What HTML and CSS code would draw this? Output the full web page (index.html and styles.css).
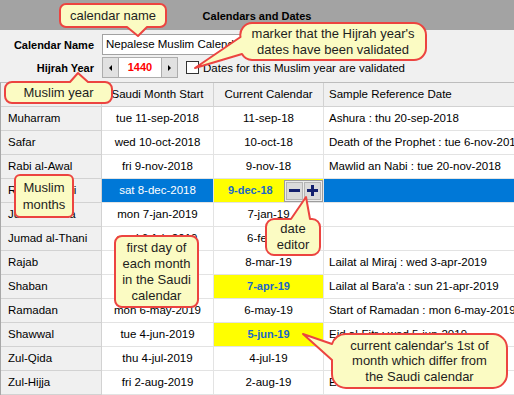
FILE: index.html
```html
<!DOCTYPE html>
<html>
<head>
<meta charset="utf-8">
<title>Calendars and Dates</title>
<link rel="stylesheet" href="styles.css">
</head>
<body>
<div class="titlebar">Calendars and Dates</div>
<div class="form">
  <div class="form-row">
    <span class="form-label">Calendar Name</span>
    <div class="textbox">Nepalese Muslim Calendar</div>
  </div>
  <div class="form-row">
    <span class="form-label">Hijrah Year</span>
    <div class="spinner">
      <span class="spin-btn"><span class="tri-left"></span></span>
      <span class="spin-value">1440</span>
      <span class="spin-btn"><span class="tri-right"></span></span>
    </div>
    <span class="checkbox"></span>
    <span class="check-label">Dates for this Muslim year are validated</span>
  </div>
</div>
<div class="grid">
  <div class="row head">
    <div class="cell"></div>
    <div class="cell">Saudi Month Start</div>
    <div class="cell">Current Calendar</div>
    <div class="cell left">Sample Reference Date</div>
  </div>
  <div class="row">
    <div class="cell fixed">Muharram</div>
    <div class="cell">tue 11-sep-2018</div>
    <div class="cell">11-sep-18</div>
    <div class="cell left">Ashura : thu 20-sep-2018</div>
  </div>
  <div class="row">
    <div class="cell fixed">Safar</div>
    <div class="cell">wed 10-oct-2018</div>
    <div class="cell">10-oct-18</div>
    <div class="cell left">Death of the Prophet : tue 6-nov-2018</div>
  </div>
  <div class="row">
    <div class="cell fixed">Rabi al-Awal</div>
    <div class="cell">fri 9-nov-2018</div>
    <div class="cell">9-nov-18</div>
    <div class="cell left">Mawlid an Nabi : tue 20-nov-2018</div>
  </div>
  <div class="row">
    <div class="cell fixed">Rabi al-Thani</div>
    <div class="cell sel">sat 8-dec-2018</div>
    <div class="cell hl editing">
      <span class="edit-text">9-dec-18</span>
      <span class="editor">
        <span class="ed-btn"><svg width="11" height="11" viewBox="0 0 11 11"><rect x="0" y="4" width="11" height="3" fill="#14206e"/></svg></span>
        <span class="ed-btn"><svg width="11" height="11" viewBox="0 0 11 11"><rect x="0" y="4" width="11" height="3" fill="#14206e"/><rect x="4" y="0" width="3" height="11" fill="#14206e"/></svg></span>
      </span>
    </div>
    <div class="cell left sel"></div>
  </div>
  <div class="row">
    <div class="cell fixed">Jumad al-Ula</div>
    <div class="cell">mon 7-jan-2019</div>
    <div class="cell">7-jan-19</div>
    <div class="cell left"></div>
  </div>
  <div class="row">
    <div class="cell fixed">Jumad al-Thani</div>
    <div class="cell">wed 6-feb-2019</div>
    <div class="cell">6-feb-19</div>
    <div class="cell left"></div>
  </div>
  <div class="row">
    <div class="cell fixed">Rajab</div>
    <div class="cell">fri 8-mar-2019</div>
    <div class="cell">8-mar-19</div>
    <div class="cell left">Lailat al Miraj : wed 3-apr-2019</div>
  </div>
  <div class="row">
    <div class="cell fixed">Shaban</div>
    <div class="cell">sat 6-apr-2019</div>
    <div class="cell hl">7-apr-19</div>
    <div class="cell left">Lailat al Bara'a : sun 21-apr-2019</div>
  </div>
  <div class="row">
    <div class="cell fixed">Ramadan</div>
    <div class="cell">mon 6-may-2019</div>
    <div class="cell">6-may-19</div>
    <div class="cell left">Start of Ramadan : mon 6-may-2019</div>
  </div>
  <div class="row">
    <div class="cell fixed">Shawwal</div>
    <div class="cell">tue 4-jun-2019</div>
    <div class="cell hl">5-jun-19</div>
    <div class="cell left">Eid al-Fitr : wed 5-jun-2019</div>
  </div>
  <div class="row">
    <div class="cell fixed">Zul-Qida</div>
    <div class="cell">thu 4-jul-2019</div>
    <div class="cell">4-jul-19</div>
    <div class="cell left"></div>
  </div>
  <div class="row">
    <div class="cell fixed">Zul-Hijja</div>
    <div class="cell">fri 2-aug-2019</div>
    <div class="cell">2-aug-19</div>
    <div class="cell left">Eid al-Adha : sun 11-aug-2019</div>
  </div>
</div>

<svg class="balloons" width="514" height="395" viewBox="0 0 514 395">
  <g fill="#fbfbc3" stroke="#ec4440" stroke-width="2" stroke-linejoin="round">
    <path d="M66 4 H160 A6 6 0 0 1 166 10 V21 A6 6 0 0 1 160 27 H147 L138 36 L127 27 H66 A6 6 0 0 1 60 21 V10 A6 6 0 0 1 66 4 Z"/>
    <path d="M252 23 H414 A12 12 0 0 1 426 35 V48 A12 12 0 0 1 414 60 H252 A12 12 0 0 1 242 54 L195 68 L240.5 37 A12 12 0 0 1 252 23 Z"/>
    <path d="M12 82 H70 L78 73 L88 82 H105 A7 7 0 0 1 112 89 V96 A7 7 0 0 1 105 103 H12 A7 7 0 0 1 5 96 V89 A7 7 0 0 1 12 82 Z"/>
    <rect x="15" y="175" width="58" height="42" rx="5"/>
    <path d="M274 219 H291 L306 197 L310 219 H312 A8 8 0 0 1 320 227 V247 A8 8 0 0 1 312 255 H274 A8 8 0 0 1 266 247 V227 A8 8 0 0 1 274 219 Z"/>
    <rect x="115" y="236" width="83" height="71" rx="7"/>
    <path d="M346 334 H493 A14 14 0 0 1 507 348 V374 A14 14 0 0 1 493 388 H346 A14 14 0 0 1 332 374 V360 L303 334 L332 344 A14 14 0 0 1 346 334 Z"/>
  </g>
</svg>
<div class="note note-calname">calendar name</div>
<div class="note note-marker">marker that the Hijrah year's<br>dates have been validated</div>
<div class="note note-year">Muslim year</div>
<div class="note note-months">Muslim<br>months</div>
<div class="note note-editor">date<br>editor</div>
<div class="note note-firstday">first day of<br>each month<br>in the Saudi<br>calendar</div>
<div class="note note-differ">current calendar's 1st of<br>month which differ from<br>the Saudi calendar</div>
</body>
</html>
```
FILE: styles.css
```css
* { box-sizing: border-box; }
html, body { margin: 0; padding: 0; }
body {
  width: 514px;
  height: 395px;
  overflow: hidden;
  position: relative;
  background: #f0f0f0;
  font-family: "Liberation Sans", Arial, sans-serif;
  font-size: 11.5px;
  color: #000;
}
.titlebar {
  height: 30px;
  background: #a3a3a3;
  font-weight: bold;
  font-size: 11px;
  text-align: center;
  padding-top: 9px;
  line-height: 14px;
}
.form {
  display: flex;
  flex-direction: column;
  gap: 2px;
  padding: 4px 0;
}
.form-row {
  display: flex;
  align-items: center;
  height: 21px;
}
.form-label {
  width: 102px;
  padding-right: 8px;
  text-align: right;
  font-weight: bold;
  font-size: 11px;
}
.textbox {
  width: 236px;
  height: 21px;
  background: #fff;
  border: 1px solid #a2a2a2;
  padding-left: 3px;
  line-height: 19px;
  white-space: nowrap;
  overflow: hidden;
}
.spinner {
  display: flex;
  height: 21px;
}
.spin-btn {
  width: 17px;
  background: #e1e1e1;
  border: 1px solid #adadad;
  display: flex;
  align-items: center;
  justify-content: center;
}
.spin-value {
  width: 42px;
  background: #fff;
  border-top: 1px solid #adadad;
  border-bottom: 1px solid #adadad;
  color: #f00;
  font-weight: bold;
  font-size: 11px;
  text-align: center;
  line-height: 19px;
}
.tri-left, .tri-right {
  width: 0;
  height: 0;
  border-top: 3px solid transparent;
  border-bottom: 3px solid transparent;
}
.tri-left { border-right: 3px solid #000; }
.tri-right { border-left: 3px solid #000; }
.checkbox {
  width: 13px;
  height: 13px;
  border: 1px solid #333;
  background: #fff;
  margin-left: 8px;
}
.check-label { margin-left: 4px; }

.grid {
  width: 514px;
  height: 313px;
  overflow: hidden;
  background: #fff;
  border-top: 1px solid #bdbdbd;
  border-left: 1px solid #a8a8a8;
}
.row {
  display: grid;
  grid-template-columns: 101px 112px 110px 200px;
  height: 24px;
}
.cell {
  border-right: 1px solid #e3e3e3;
  border-bottom: 1px solid #e3e3e3;
  line-height: 23px;
  white-space: nowrap;
  overflow: hidden;
  text-align: center;
}
.head .cell, .cell.fixed {
  background: #f0f0f0;
  border-color: #d2d2d2;
}
.cell.fixed { text-align: left; padding-left: 7px; }
.cell.left { text-align: left; padding-left: 5px; }
.cell.sel { background: #0078d7; color: #fff; }
.cell.hl {
  background: #ffff00;
  color: #1a68c8;
  font-weight: bold;
  font-size: 11px;
}
.cell.editing {
  display: flex;
  align-items: center;
  justify-content: space-between;
  padding-left: 14px;
}
.editor {
  display: flex;
  gap: 1px;
  height: 22px;
  padding: 1px;
  background: #ececec;
  border: 1px solid #9c9c9c;
}
.ed-btn {
  width: 17px;
  display: flex;
  align-items: center;
  justify-content: center;
  background: #dadada;
  border: 1px solid #b4b4b4;
}

.balloons {
  position: absolute;
  left: 0;
  top: 0;
  pointer-events: none;
}
.note {
  position: absolute;
  display: flex;
  align-items: center;
  justify-content: center;
  text-align: center;
  font-size: 13px;
  line-height: 16px;
  color: #1e1e1e;
  white-space: nowrap;
}
.note-calname { left: 60px; top: 4px; width: 106px; height: 23px; }
.note-marker { left: 240px; top: 23px; width: 186px; height: 37px; }
.note-year { left: 5px; top: 82px; width: 107px; height: 21px; }
.note-months { left: 15px; top: 175px; width: 58px; height: 42px; line-height: 17px; }
.note-editor { left: 266px; top: 219px; width: 54px; height: 36px; }
.note-firstday { left: 115px; top: 236px; width: 83px; height: 71px; }
.note-differ { left: 332px; top: 334px; width: 175px; height: 54px; line-height: 15.5px; }
```
